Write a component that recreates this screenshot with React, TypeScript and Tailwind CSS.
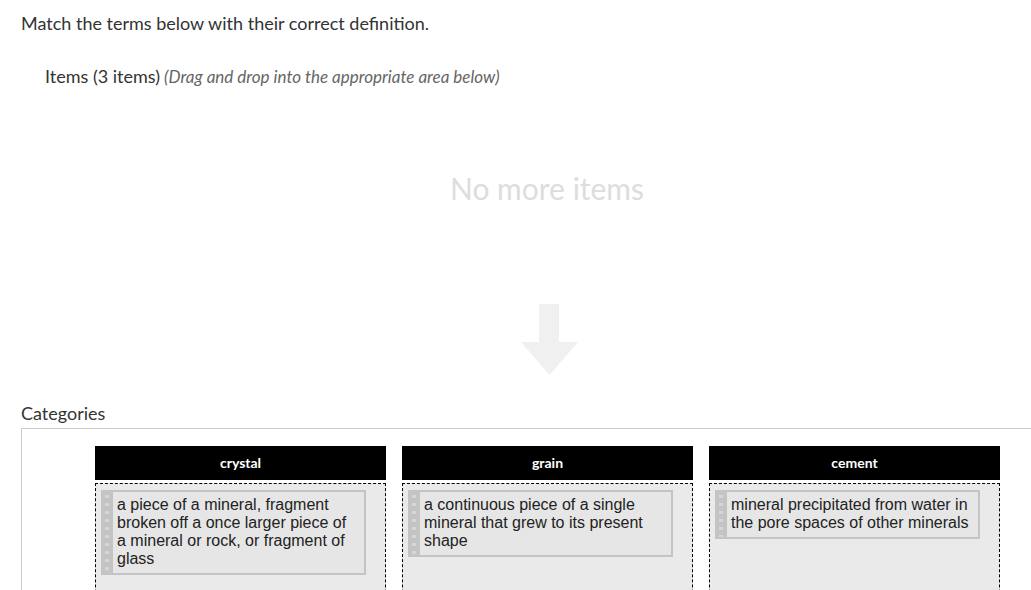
import React from "react";

const categories = [
  {
    name: "crystal",
    text: "a piece of a mineral, fragment broken off a once larger piece of a mineral or rock, or fragment of glass",
  },
  {
    name: "grain",
    text: "a continuous piece of a single mineral that grew to its present shape",
  },
  {
    name: "cement",
    text: "mineral precipitated from water in the pore spaces of other minerals",
  },
];

function Grip() {
  return (
    <div className="relative w-[12px] shrink-0 self-stretch bg-[#c4c4c4] overflow-hidden">
      <div className="absolute left-[4px] top-[3px] flex flex-col gap-[5px]">
        {Array.from({ length: 12 }).map((_, i) => (
          <div key={i} className="w-[4px] h-[3px] bg-[#d6d6d6]" />
        ))}
      </div>
    </div>
  );
}

export default function App() {
  return (
    <div className="w-[1031px] h-[590px] overflow-hidden bg-white font-['Lato','Noto_Sans',sans-serif] text-[#333]">
      <div className="pl-[21px] pt-[11px]">
        <p className="text-[18px] leading-[24px]">Match the terms below with their correct definition.</p>
        <div className="ml-[24px] mt-[29px] h-[24px] leading-[24px] whitespace-nowrap">
          <span className="text-[18px]">Items (3 items)</span>{" "}
          <span className="text-[17px] italic text-[#666]">(Drag and drop into the appropriate area below)</span>
        </div>
        <div className="mt-[82px] pl-[42px] flex justify-center">
          <span className="text-[30px] leading-[36px] text-[#dddddd]">No more items</span>
        </div>
        <div className="mt-[98px] pl-[46px] flex justify-center">
          <svg width="57" height="72" viewBox="0 0 57 72">
            <path d="M18 0 H38 V38 H57 L28.5 71 L0 38 H18 Z" fill="#f0f0f0" />
          </svg>
        </div>
        <p className="mt-[25px] text-[18px] leading-[24px]">Categories</p>
        <div className="mt-[3px] border-t border-l border-[#cccccc] pt-[17px] pl-[73px] h-[200px]">
          <div className="flex gap-[16px] items-start">
            {categories.map((c) => (
              <div key={c.name} className="w-[291px] shrink-0">
                <div className="h-[34px] pb-[2px] bg-black text-white font-bold text-[14px] flex items-center justify-center">
                  {c.name}
                </div>
                <div className="mt-[3px] border border-dashed border-black bg-[#eaeaea] pt-[6px] pl-[5px] h-[140px]">
                  <div className="w-[265px] border-2 border-[#c4c4c4] border-l-0 bg-[#e6e6e6] flex">
                    <Grip />
                    <div className="pl-[4px] pr-[8px] pt-[4px] pb-[5px] font-['Liberation_Sans',Arial,sans-serif] text-[16px] leading-[18px] text-[#222]">
                      {c.text}
                    </div>
                  </div>
                </div>
              </div>
            ))}
          </div>
        </div>
      </div>
    </div>
  );
}
